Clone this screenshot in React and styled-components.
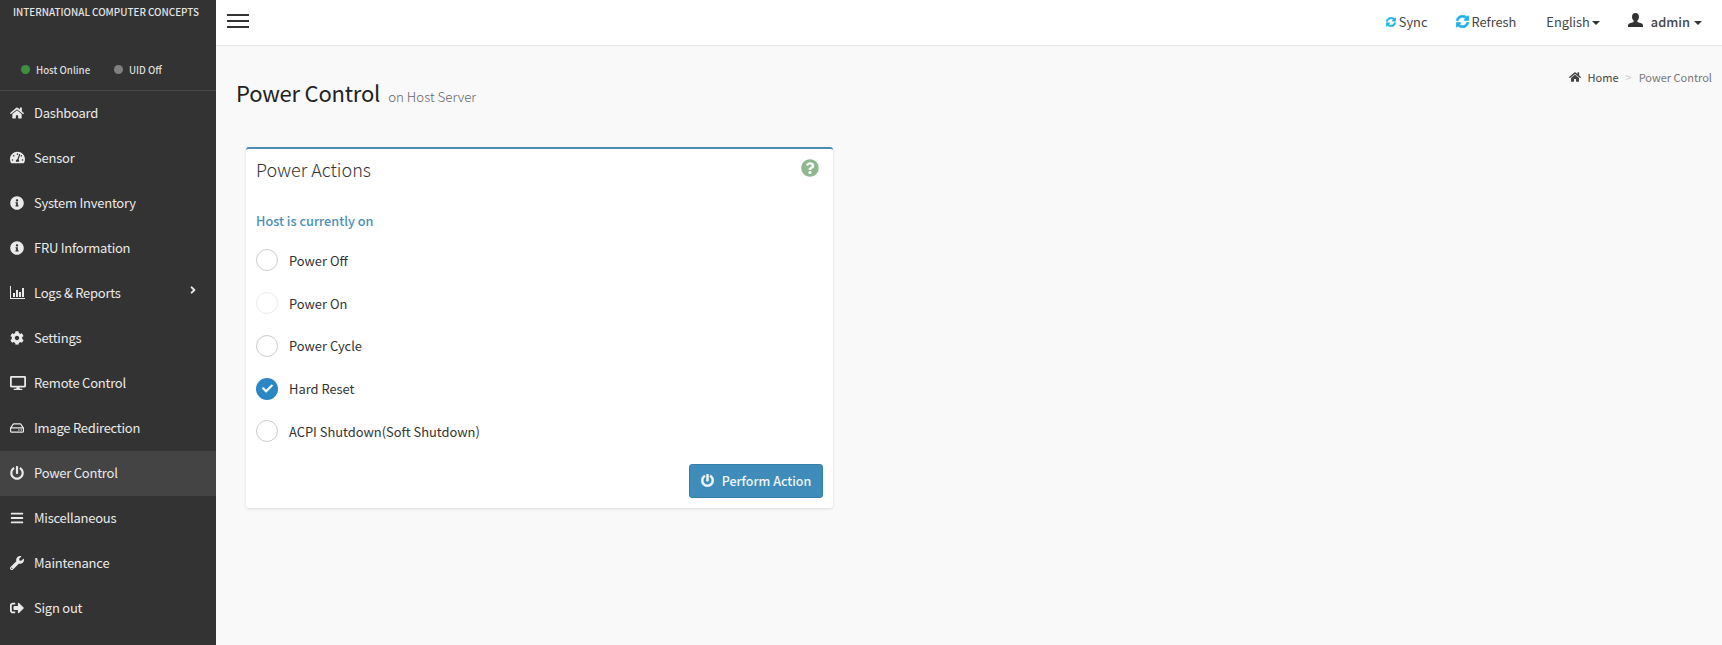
import React from "react";
import styled, { createGlobalStyle } from "styled-components";
import {
  FaHome, FaTachometerAlt, FaInfoCircle, FaCog, FaDesktop, FaRegHdd, FaPowerOff,
  FaBars, FaWrench, FaSignOutAlt, FaSyncAlt, FaQuestionCircle, FaCheck, FaAngleRight,
} from "react-icons/fa";

const FONT = `"Noto Sans CJK SC", "Open Sans", sans-serif`;

const Global = createGlobalStyle`
  html, body { margin: 0; padding: 0; height: 100%; }
  body { font-family: ${FONT}; background: #f9f9f9; overflow: hidden; }
  * { box-sizing: border-box; }
`;

const Page = styled.div`
  display: flex;
  width: 1722px;
  height: 645px;
`;

const Sidebar = styled.aside`
  width: 216px;
  flex: none;
  background: #333333;
  display: flex;
  flex-direction: column;
`;

const Brand = styled.div`
  height: 56px;
  padding: 4px 0 0 13px;
  font-size: 9.9px;
  line-height: 16px;
  font-weight: 500;
  color: #e4e4e4;
  white-space: nowrap;
`;

const StatusRow = styled.div`
  height: 35px;
  display: flex;
  align-items: center;
  padding: 0 0 7px 21px;
  border-bottom: 1px solid #484848;
`;

const Status = styled.div`
  display: flex;
  align-items: center;
  width: ${(p) => p.$w}px;
  font-size: 9.7px;
  font-weight: 500;
  color: #dddddd;
`;

const Dot = styled.span`
  width: 9px;
  height: 9px;
  border-radius: 50%;
  margin-right: 6px;
  background: ${(p) => p.$c};
`;

const Item = styled.div`
  height: 45px;
  display: flex;
  align-items: center;
  padding: 0 0 2px 10px;
  position: relative;
  background: ${(p) => (p.$active ? "#444444" : "transparent")};
  color: #eaeaea;
  font-size: 13px;
  letter-spacing: -0.24px;
`;

const ItemIcon = styled.span`
  width: 24px;
  flex: none;
  display: flex;
  align-items: center;
  font-size: ${(p) => p.$size || 14}px;
`;

const ItemChevron = styled.span`
  position: absolute;
  left: 187px;
  top: 13px;
  font-size: 12px;
  line-height: 12px;
`;

const Main = styled.main`
  flex: 1;
  display: flex;
  flex-direction: column;
`;

const Topbar = styled.header`
  height: 46px;
  background: #ffffff;
  border-bottom: 1px solid #e7e7e7;
  display: flex;
  align-items: center;
  padding: 0 20px 2px 11px;
  color: #444;
  font-size: 12.8px;
`;

const Burger = styled.div`
  width: 22px;
  height: 14px;
  margin-bottom: 2px;
  border-top: 2px solid #333;
  border-bottom: 2px solid #333;
  position: relative;
  &::after {
    content: "";
    position: absolute;
    left: 0;
    right: 0;
    top: 4px;
    height: 2px;
    background: #333;
  }
`;

const TopActions = styled.div`
  margin-left: auto;
  display: flex;
  align-items: center;
`;

const TopLink = styled.div`
  display: flex;
  align-items: center;
  margin-left: ${(p) => p.$ml}px;
  font-weight: ${(p) => p.$weight || 400};
  white-space: nowrap;
`;

const SyncIcon = styled(FaSyncAlt)`
  color: #22b3e6;
  margin-right: ${(p) => p.$mr}px;
  stroke: currentColor;
  stroke-width: 30px;
`;

const UserGlyph = styled.svg`
  width: 15px;
  height: 14px;
  margin: 0 8px 4px 0;
  fill: #333;
`;

const Caret = styled.span`
  width: 0;
  height: 0;
  margin-left: ${(p) => p.$ml}px;
  margin-top: 2px;
  border-left: 4px solid transparent;
  border-right: 4px solid transparent;
  border-top: 4px solid #333;
`;

const Content = styled.div`
  flex: 1;
  padding: 0 0 0 20px;
  position: relative;
`;

const PageHead = styled.div`
  display: flex;
  align-items: baseline;
  height: 65px;
  padding-top: 29px;
`;

const Title = styled.h1`
  margin: 0;
  font-size: 22px;
  line-height: 34px;
  font-weight: 400;
  letter-spacing: -0.2px;
  color: #222222;
`;

const Subtitle = styled.small`
  font-size: 13.3px;
  font-weight: 300;
  color: #666666;
  margin-left: 8px;
`;

const Crumbs = styled.div`
  position: absolute;
  right: 10px;
  top: 23px;
  display: flex;
  align-items: center;
  font-size: 11px;
  line-height: 16px;
  color: #444;
`;

const HomeMark = styled(FaHome)`
  font-size: 12px;
  margin-right: 7px;
`;

const CrumbSep = styled.span`
  color: #ccc;
  margin: 0 7px;
`;

const CrumbCurrent = styled.span`
  color: #777;
`;

const Card = styled.section`
  width: 587px;
  height: 361px;
  margin: 36px 0 0 10px;
  padding: 8px 10px 10px;
  background: #ffffff;
  border-top: 2px solid #4a8db2;
  border-radius: 3px;
  box-shadow: 0 1px 3px rgba(0, 0, 0, 0.12);
  display: flex;
  flex-direction: column;
`;

const CardHead = styled.div`
  display: flex;
  align-items: flex-start;
  justify-content: space-between;
  height: 54px;
`;

const CardTitle = styled.h3`
  margin: 0;
  font-size: 18px;
  line-height: 24px;
  font-weight: 300;
  color: #333333;
`;

const Help = styled.span`
  color: #8fb88f;
  font-size: 18px;
  line-height: 18px;
  margin: 2px 4px 0 0;
`;

const HostState = styled.div`
  font-size: 12.7px;
  line-height: 20px;
  font-weight: 500;
  color: #4a8fb8;
  margin-bottom: 8px;
`;

const Radio = styled.label`
  height: 42.75px;
  display: flex;
  align-items: center;
  font-size: 12.9px;
  color: #333333;
`;

const Circle = styled.span`
  width: 22px;
  height: 22px;
  flex: none;
  margin-right: 11px;
  border-radius: 50%;
  display: flex;
  align-items: center;
  justify-content: center;
  color: #fff;
  font-size: 11px;
  background: ${(p) => (p.$on ? "#2a87c4" : "#fff")};
  border: ${(p) => (p.$on ? "none" : `1px solid ${p.$faint ? "#ececec" : "#cccccc"}`)};
`;

const Actions = styled.div`
  margin-top: auto;
  display: flex;
  justify-content: flex-end;
`;

const Button = styled.button`
  width: 134px;
  height: 34px;
  display: flex;
  align-items: center;
  justify-content: center;
  gap: 8px;
  font-family: ${FONT};
  font-size: 12.5px;
  font-weight: 500;
  color: #eef6fb;
  background: #3f8cbb;
  border: 1px solid #367fa9;
  border-radius: 3px;
  padding: 0 0 2px;
`;

const ButtonIcon = styled(FaPowerOff)`
  font-size: 13px;
  stroke: currentColor;
  stroke-width: 20px;
`;

const ChartIcon = () => (
  <svg width="15" height="13" viewBox="0 0 15 13" fill="currentColor">
    <path d="M0 0h1v12h14v1H0z" />
    <path d="M3 7h2v4H3zM6 4h2v7H6zM9 6h2v5H9zM12 2h2v9h-2z" />
  </svg>
);

const menu = [
  { label: "Dashboard", icon: <FaHome /> },
  { label: "Sensor", icon: <FaTachometerAlt />, size: 15 },
  { label: "System Inventory", icon: <FaInfoCircle /> },
  { label: "FRU Information", icon: <FaInfoCircle /> },
  { label: "Logs & Reports", icon: <ChartIcon />, sub: true },
  { label: "Settings", icon: <FaCog /> },
  { label: "Remote Control", icon: <FaDesktop />, size: 16 },
  { label: "Image Redirection", icon: <FaRegHdd /> },
  { label: "Power Control", icon: <FaPowerOff />, active: true },
  { label: "Miscellaneous", icon: <FaBars /> },
  { label: "Maintenance", icon: <FaWrench /> },
  { label: "Sign out", icon: <FaSignOutAlt /> },
];

const radios = [
  { label: "Power Off" },
  { label: "Power On", faint: true },
  { label: "Power Cycle" },
  { label: "Hard Reset", on: true },
  { label: "ACPI Shutdown(Soft Shutdown)" },
];

export default function App() {
  return (
    <Page>
      <Global />
      <Sidebar>
        <Brand>INTERNATIONAL COMPUTER CONCEPTS</Brand>
        <StatusRow>
          <Status $w={93}><Dot $c="#3f8f3f" />Host Online</Status>
          <Status $w={70}><Dot $c="#808080" />UID Off</Status>
        </StatusRow>
        {menu.map((m) => (
          <Item key={m.label} $active={m.active}>
            <ItemIcon $size={m.size}>{m.icon}</ItemIcon>
            {m.label}
            {m.sub && <ItemChevron><FaAngleRight /></ItemChevron>}
          </Item>
        ))}
      </Sidebar>
      <Main>
        <Topbar>
          <Burger />
          <TopActions>
            <TopLink><SyncIcon size={10} $mr={3} />Sync</TopLink>
            <TopLink $ml={29}><SyncIcon size={13} $mr={2} />Refresh</TopLink>
            <TopLink $ml={30}>English<Caret $ml={2} /></TopLink>
            <TopLink $ml={28} $weight={500}>
              <UserGlyph viewBox="0 0 15 14">
                <path d="M7.5 0C5.3 0 4 1.6 4 3.8c0 1.6.7 3 1.6 3.8v1.3L1.2 10.6C.4 11 0 11.6 0 12.4V14h15v-1.6c0-.8-.4-1.4-1.2-1.8L9.4 8.9V7.6c.9-.8 1.6-2.2 1.6-3.8C11 1.6 9.7 0 7.5 0z" />
              </UserGlyph>
              admin<Caret $ml={4} />
            </TopLink>
          </TopActions>
        </Topbar>
        <Content>
          <PageHead>
            <Title>Power Control</Title>
            <Subtitle>on Host Server</Subtitle>
          </PageHead>
          <Crumbs>
            <HomeMark />Home
            <CrumbSep>&gt;</CrumbSep>
            <CrumbCurrent>Power Control</CrumbCurrent>
          </Crumbs>
          <Card>
            <CardHead>
              <CardTitle>Power Actions</CardTitle>
              <Help><FaQuestionCircle /></Help>
            </CardHead>
            <HostState>Host is currently on</HostState>
            {radios.map((r) => (
              <Radio key={r.label}>
                <Circle $on={r.on} $faint={r.faint}>{r.on && <FaCheck />}</Circle>
                {r.label}
              </Radio>
            ))}
            <Actions>
              <Button><ButtonIcon />Perform Action</Button>
            </Actions>
          </Card>
        </Content>
      </Main>
    </Page>
  );
}
